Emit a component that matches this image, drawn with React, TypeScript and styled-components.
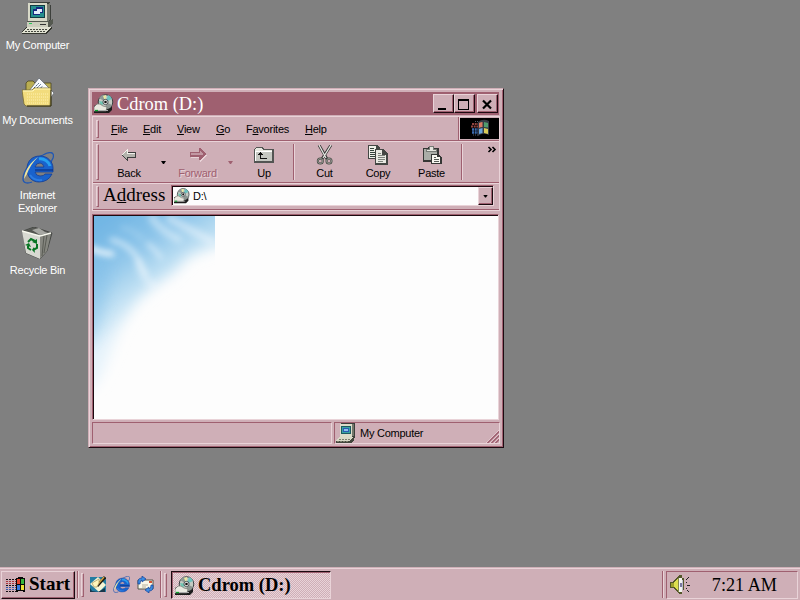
import React from "react";
import styled, { createGlobalStyle } from "styled-components";

const face = "#cfafb7";
const light = "#e9d3d8";
const shade = "#9f6070";
const dark = "#1c0a10";

const Global = createGlobalStyle`
  * { box-sizing: border-box; }
  body { margin: 0; overflow: hidden; font-family: "Liberation Sans", Arial, sans-serif; font-size: 11px; color: #000; }
  svg { display: block; flex: none; }
  u { text-decoration-thickness: 1px; text-underline-offset: 1px; }
`;

const Screen = styled.div`
  position: relative;
  width: 800px;
  height: 600px;
  display: flex;
  flex-direction: column;
  background: #808080;
`;

const Desktop = styled.div`
  flex: 1;
  width: 75px;
`;

const Shortcut = styled.div`
  height: 75px;
  padding-top: 2px;
  display: flex;
  flex-direction: column;
  align-items: center;
  gap: 5px;
  color: #fff;
`;

const Label = styled.span<{ $track?: number }>`
  font-size: 11px;
  line-height: 13px;
  letter-spacing: ${(p) => p.$track ?? -0.25}px;
  white-space: pre;
  text-align: center;
`;

const Window = styled.section`
  position: absolute;
  left: 88px;
  top: 88px;
  width: 416px;
  height: 360px;
  padding: 2px;
  display: flex;
  flex-direction: column;
  background: ${face};
  border: 1px solid ${face};
  border-right-color: ${dark};
  border-bottom-color: ${dark};
  box-shadow: inset 1px 1px ${light}, inset -1px -1px ${shade};
`;

const TitleBar = styled.header`
  height: 23px;
  margin: 1px 2px 0 1px;
  padding: 0 1px 0 2px;
  display: flex;
  align-items: center;
  background: ${shade};
  color: #fff;
`;

const Serif = styled.span<{ $bold?: boolean; $size?: number; $track?: number }>`
  font-family: "Liberation Serif", "Times New Roman", serif;
  font-size: ${(p) => p.$size ?? 18}px;
  font-weight: ${(p) => (p.$bold ? 700 : 400)};
  letter-spacing: ${(p) => p.$track ?? 0}px;
  line-height: 20px;
  white-space: nowrap;
`;

const TitleText = styled(Serif)`
  flex: 1;
  margin: 0 0 0 3px;
`;

const TaskText = styled(Serif)`
  margin-top: -2px;
`;

const AddressText = styled(Serif)`
  margin: 1px 0 0 4px;
`;

const CaptionButton = styled.button<{ $gap?: number }>`
  width: 21px;
  height: 19px;
  margin: 0 0 0 ${(p) => p.$gap ?? 0}px;
  padding: 0;
  background: ${face};
  border: 1px solid;
  border-color: ${light} ${dark} ${dark} ${light};
  box-shadow: inset -1px -1px ${shade};
`;

const Bands = styled.div`
  height: 95px;
  margin: 1px 1px 0;
  border: 1px solid ${light};
  display: flex;
  flex-direction: column;
`;

const Band = styled.div<{ $h: number }>`
  height: ${(p) => p.$h}px;
  padding-left: 3px;
  display: flex;
  border-bottom: 1px solid ${shade};
  & + & { border-top: 1px solid ${light}; }
`;

const Grip = styled.i<{ $h: number; $m?: string }>`
  width: 3px;
  height: ${(p) => p.$h}px;
  margin: ${(p) => p.$m ?? "2px 0 0"};
  flex: none;
  border: 1px solid;
  border-color: ${light} ${shade} ${shade} ${light};
`;

const Menu = styled.nav`
  flex: 1;
  display: flex;
  padding: 6px 0 0 12px;
`;

const MenuItem = styled(Label)<{ $w: number }>`
  width: ${(p) => p.$w}px;
  text-align: left;
`;

const Throbber = styled.div`
  width: 41px;
  height: 23px;
  border-left: 1px solid ${shade};
  padding: 1px 0 0 1px;
  box-shadow: inset 1px 0 ${light};
`;

const Tool = styled.div<{ $w: number; $off?: boolean }>`
  width: ${(p) => p.$w}px;
  padding-top: 3px;
  display: flex;
  flex-direction: column;
  align-items: center;
  gap: 2px;
  color: ${(p) => (p.$off ? shade : "#000")};
  text-shadow: ${(p) => (p.$off ? `1px 1px ${light}` : "none")};
`;

const DropArrow = styled.i<{ $off?: boolean; $m?: string }>`
  width: 5px;
  height: 3px;
  flex: none;
  margin: ${(p) => p.$m ?? "0"};
  background: ${(p) => (p.$off ? shade : "#000")};
  clip-path: polygon(0 0, 100% 0, 60% 100%, 40% 100%);
`;

const Rule = styled.i<{ $h: number; $m: string }>`
  width: 2px;
  height: ${(p) => p.$h}px;
  margin: ${(p) => p.$m};
  flex: none;
  background: linear-gradient(90deg, ${shade} 50%, ${light} 50%);
`;

const Chevrons = styled.svg`
  margin: 2px 0 0 24px;
`;

const AddressField = styled.div`
  width: 323px;
  height: 21px;
  margin: 1px 5px 0 auto;
  padding: 1px 0 0 2px;
  display: flex;
  align-items: center;
  gap: 3px;
  background: #fdfdfd;
  border: 1px solid;
  border-color: ${shade} ${light} ${light} ${shade};
  box-shadow: inset 1px 1px ${dark};
`;

const DropButton = styled.button`
  width: 15px;
  height: 18px;
  margin: 0 0 0 auto;
  padding: 0;
  display: flex;
  align-items: center;
  justify-content: center;
  background: ${face};
  border: 1px solid;
  border-color: ${light} ${dark} ${dark} ${light};
  box-shadow: inset -1px -1px ${shade};
`;

const View = styled.main`
  height: 206px;
  margin: 3px 2px 0 1px;
  background: #fdfdfd;
  border: 1px solid;
  border-color: ${shade} ${light} ${light} ${shade};
  box-shadow: inset 1px 1px ${dark};
  padding: 1px;
`;

const StatusBar = styled.footer`
  display: flex;
  gap: 2px;
  margin: 2px 0 0 1px;
`;

const StatusCell = styled.div<{ $w: number }>`
  width: ${(p) => p.$w}px;
  height: 22px;
  display: flex;
  align-items: center;
  gap: 4px;
  padding-left: 1px;
  border: 1px solid;
  border-color: ${shade} ${light} ${light} ${shade};
`;

const ResizeCorner = styled.svg`
  margin: auto 0 0 auto;
`;

const Taskbar = styled.div`
  height: 33px;
  padding: 3px 2px 0 1px;
  display: flex;
  background: ${face};
  border-top: 1px solid ${face};
  box-shadow: inset 0 1px ${light};
`;

const StartButton = styled.button`
  width: 74px;
  height: 28px;
  padding: 0 0 0 3px;
  display: flex;
  align-items: center;
  gap: 2px;
  background: ${face};
  border: 1px solid;
  border-color: ${light} ${dark} ${dark} ${light};
  box-shadow: inset -1px -1px ${shade};
`;

const QuickLaunch = styled.div`
  width: 75px;
  display: flex;
  gap: 7px;
  padding: 5px 0 0 6px;
`;

const TaskButton = styled.button`
  width: 160px;
  height: 28px;
  margin-left: 4px;
  padding: 1px 0 0 3px;
  display: flex;
  align-items: center;
  gap: 3px;
  background: repeating-conic-gradient(${face} 0 25%, ${light} 0 50%) 0 0 / 2px 2px;
  border: 1px solid;
  border-color: ${dark} ${light} ${light} ${dark};
  box-shadow: inset 1px 1px ${shade};
`;

const Tray = styled.div`
  width: 132px;
  height: 28px;
  padding: 0 20px 0 3px;
  display: flex;
  align-items: center;
  justify-content: space-between;
  border: 1px solid;
  border-color: ${shade} ${light} ${light} ${shade};
`;

const Spacer = styled.div`
  flex: 1;
`;

const ComputerIcon = () => (
  <svg width="32" height="32" viewBox="0 0 32 32" shapeRendering="crispEdges">
    <path d="M7 1L9 0H28V3L29 4V20L27 22H7Z" fill="#3d403c" />
    <path d="M6 1H25V20H6Z" fill="#d8d9c8" />
    <path d="M25 2L28 1V18L25 20Z" fill="#777b70" />
    <path d="M8 3H23V16H8Z" fill="#123c42" />
    <path d="M9 4H22V15H9Z" fill="#258f8d" />
    <path d="M11 7H18V13H11ZM14 5H21V11H14Z" fill="#172a80" />
    <path d="M12 9H18V12H12ZM15 7H20V10H15Z" fill="#e3eefb" />
    <path d="M5 19H27L31 17V22L26 26H5Z" fill="#555950" />
    <path d="M5 20H26V25H5Z" fill="#cbcdbc" />
    <path d="M7 21h3v1H7Z" fill="#26c657" />
    <path d="M18 22h6v1h-6Z" fill="#333" />
    <path d="M4 25H30V27L24 32H0V29Z" fill="#34362f" />
    <path d="M5 25H29L23 31H0Z" fill="#e1e2d2" />
    <path d="M5 27.5H26M3 29.5H23" stroke="#464940" strokeWidth="1" strokeDasharray="2 1" />
  </svg>
);

const SmallComputerIcon = () => (
  <svg width="20" height="20" viewBox="0 0 20 20" shapeRendering="crispEdges">
    <path d="M5 0H19V14L17 16H5Z" fill="#3a3e3a" />
    <path d="M4 1H16V14H4Z" fill="#dcdcca" />
    <path d="M16 1H18V13H16Z" fill="#73776b" />
    <path d="M5 3H15V11H5Z" fill="#1c5a60" />
    <path d="M6 4H14V10H6Z" fill="#38a3a3" />
    <path d="M7 5H13V9H7Z" fill="#2a5bb4" />
    <path d="M8 6H12V8H8Z" fill="#8cc0ea" />
    <path d="M3 14H18V17L15 20H0V18Z" fill="#42463c" />
    <path d="M3 14H17L14 18H0Z" fill="#d9dac8" />
    <path d="M3 16.5H15M1 18.5H13" stroke="#7d806e" strokeDasharray="2 1" />
  </svg>
);

const DocumentsIcon = () => (
  <svg width="32" height="32" viewBox="0 0 32 32">
    <path d="M4 15V6L6 4H11L13 6H29V29H5Z" fill="#b9ad52" stroke="#4a451e" strokeWidth=".8" />
    <path d="M7 14L17 1L32 16L27 23Z" fill="#f8fbff" stroke="#59606a" strokeWidth=".7" />
    <path d="M12 11L17 6M13 13L19 7M16 13L21 9M20 14L23 11M23 15L25 13" stroke="#385575" strokeDasharray="2 1" />
    <path d="M0 13H10L12 11H29L28 29H4L2 27Z" fill="#f2dc7d" stroke="#796d32" strokeWidth=".8" />
    <path d="M1 14H11L13 12H28" fill="none" stroke="#fff8bc" />
    <path d="M5 17H26M5 20H26M5 23H27M5 26H27" stroke="#fff1b1" strokeDasharray="1 1" />
    <path d="M5 29H29V13" stroke="#3b371d" fill="none" />
  </svg>
);

const ExplorerIcon = ({ size }: { size: number }) => (
  <svg width={size} height={size} viewBox="0 0 32 32">
    <path d="M10 30C5 32 1 31 1 27C1 19 10 7 21 3C28 -1 33 0 31 6L29 10" fill="none" stroke="#2258b2" strokeWidth="1.3" />
    <path fillRule="evenodd" d="M31 16V20H13Q14 24 18 24Q22 24 23 22H30Q26 30 17 30C10 30 5 25 5 17C5 9 10 4 18 4C26 4 31 10 31 16ZM13 15H22Q21 11 18 11Q14 11 13 15Z" fill="#1962cc" stroke="#123d97" strokeWidth=".8" />
    <path d="M17 7C22 6 27 10 28 14" fill="none" stroke="#27a0ee" strokeWidth="3" />
    <path d="M8 23Q12 29 20 28" fill="none" stroke="#2c7ce0" strokeWidth="2" />
    <path d="M2 27C3 17 9 10 16 5Q8 13 5 22Z" fill="#eee6a1" />
    <path d="M13 18H31" stroke="#072f83" strokeWidth="1.2" />
  </svg>
);

const RecycleIcon = () => (
  <svg width="32" height="32" viewBox="0 0 32 32">
    <path d="M1 4L12 0L30 6L25 24L18 32L4 26Z" fill="#666763" stroke="#343632" strokeWidth=".7" />
    <path d="M2 4L12 1L28 6L18 9Z" fill="#545651" />
    <path d="M10 3L17 1L23 5L26 6L18 8Z" fill="#a6a7a2" />
    <path d="M0 4L18 9L18 32L4 26Z" fill="#d8d9d2" />
    <path d="M18 9L29 6L25 24L18 32Z" fill="#85867f" />
    <path d="M22 9L20 29M25 8L22 26" stroke="#595b54" />
    <path d="M0 4L18 9L29 6" stroke="#f8f9ef" strokeWidth="1.3" fill="none" />
    <g fill="none" stroke="#087524" strokeWidth="2"><path d="M6 15L9 12L13 14" /><path d="M15 17L15 21L11 23" /><path d="M9 23L6 21L6 19" /></g>
    <path d="M10 15L15 17L15 12ZM12 20L10 23L13 26ZM3 18L7 16L9 20Z" fill="#087524" />
  </svg>
);

const DiscIcon = ({ size = 20 }: { size?: number }) => (
  <svg width={size} height={size} viewBox="0 0 20 20">
    <path d="M0 12L4 10H17L18 12V16L15 19H0Z" fill="#1c1c1c" />
    <circle cx="11.5" cy="8" r="7.3" fill="#c4cbc4" stroke="#3a4041" strokeWidth="1" />
    <path d="M11.5 8L5 4Q8 0 11 1Z" fill="#8f9a96" />
    <path d="M11.5 8L14 1Q17 2 18 5Z" fill="#6cc3c0" />
    <path d="M11.5 8L18 11Q16 15 12 15Z" fill="#8d9692" />
    <path d="M11.5 8L7 12L5 7Z" fill="#6fc7b4" />
    <path d="M11.5 8L9 2L12 1Z" fill="#eceba0" />
    <circle cx="11.5" cy="8" r="2.6" fill="#f9faf7" stroke="#4b5054" />
    <circle cx="11.5" cy="8" r="1.3" fill="#111" />
    <path d="M0 13L3 10Q6 9 9 12L13 13L12 17H0Z" fill="#e9e9e0" stroke="#6f706a" strokeWidth=".7" />
    <path d="M0 16.5H14" fill="none" stroke="#aaa" />
    <path d="M1 16.5H4" stroke="#08a52a" strokeWidth="1.3" />
  </svg>
);

const StartFlag = () => (
  <svg width="22" height="20" viewBox="0 0 22 20" shapeRendering="crispEdges">
    <path d="M11 3H13V2H18V3H20V17H18V16H13V17H11Z" fill="#080808" />
    <path d="M12 4H15V9H12Z" fill="#e5442c" />
    <path d="M16 4H19V9H16Z" fill="#36b53c" />
    <path d="M12 10H15V15H12Z" fill="#3478e0" />
    <path d="M16 10H19V15H16Z" fill="#efe034" />
    <path d="M1 4.5H11M1 10.5H11M1 16.5H11" stroke="#151015" strokeDasharray="2 1" />
    <path d="M1 6.5H11M1 8.5H11" stroke="#a8333b" strokeDasharray="2 1" />
    <path d="M1 12.5H11M1 14.5H11" stroke="#3357ac" strokeDasharray="2 1" />
  </svg>
);

const BrandFlag = () => (
  <svg width="39" height="21" viewBox="0 0 39 21">
    <rect width="39" height="21" fill="#000" />
    <path d="M18 4Q23 0 29 3V17Q23 14 18 18Z" fill="#343a44" />
    <path d="M19 5Q21 4 22.5 4V9Q20 9 19 10Z" fill="#d97a63" />
    <path d="M24 4L28 5V9.5L24 9Z" fill="#4f9b6d" />
    <path d="M19 11L22.5 10V15L19 16Z" fill="#6aa5dd" />
    <path d="M24 10L28 11V16L24 15Z" fill="#d9cb58" />
    <path d="M12 6H18M11 8.5H18" stroke="#8f4440" strokeWidth="2" strokeDasharray="2 .7" />
    <path d="M12 11.5H18M12 14.5H18" stroke="#3c6cae" strokeWidth="2.3" strokeDasharray="2 .7" />
    <path d="M15 3.5H18M13 17H18" stroke="#505c68" strokeDasharray="1 1" />
  </svg>
);

const ArrowIcon = ({ off = false }: { off?: boolean }) => (
  <svg width="20" height="20" viewBox="0 0 20 20" shapeRendering="crispEdges">
    {off ? (
      <>
        <path d="M3 9H12V4L19 10L12 17V13H3Z" fill={light} />
        <path d="M2 7H11V3H12L18 9L12 15H11V12H2Z" fill={shade} />
        <path d="M3 8H12V6L15 9V10H3Z" fill="#c298a3" />
      </>
    ) : (
      <>
        <path d="M2 10L9 3V7H17V13H9V17Z" fill="#3e3e3e" />
        <path d="M3 10L8 5V8H16V12H8V15Z" fill="#b3b3ac" />
        <path d="M3 10L8 5V8.5H16" fill="none" stroke="#f1f0ea" />
      </>
    )}
  </svg>
);

const FolderIcon = () => (
  <svg width="20" height="20" viewBox="0 0 20 20" shapeRendering="crispEdges">
    <path d="M0 17V4L2 2H8L10 4H20V18H0Z" fill="#535553" />
    <path d="M1 4L3 3H7L9 5H18V7H1Z" fill="#e7e8e0" />
    <path d="M1 7H18V16H1Z" fill="#c6c8c2" />
    <path d="M1 6.5H18M1.5 6V16" stroke="#fff" />
    <path d="M6 7H7V8H8V9H9V10H7V13H13V14H6V10H4V9H5V8H6Z" fill="#111" />
  </svg>
);

const CutIcon = () => (
  <svg width="20" height="20" viewBox="0 0 20 20">
    <path d="M4 0L12 14M16 0L7 14" stroke="#333" strokeWidth="2.8" />
    <path d="M4 0L11 13M16 0L8 13" stroke="#e3e5df" strokeWidth="1.3" />
    <circle cx="5.3" cy="16" r="2.5" fill="none" stroke="#41443f" strokeWidth="2" />
    <circle cx="14" cy="16" r="2.5" fill="none" stroke="#41443f" strokeWidth="2" />
    <circle cx="5.3" cy="16" r="2.5" fill="none" stroke="#b6b9b1" strokeWidth=".7" />
    <circle cx="14" cy="16" r="2.5" fill="none" stroke="#b6b9b1" strokeWidth=".7" />
  </svg>
);

const CopyIcon = () => (
  <svg width="20" height="20" viewBox="0 0 20 20" shapeRendering="crispEdges">
    <path d="M0 0H9L12 3V14H0Z" fill="#444744" />
    <path d="M1 1H8V4H11V13H1Z" fill="#f0f0e9" />
    <path d="M2 3.5H6M2 5.5H6M2 7.5H7M2 9.5H7M2 11.5H7" stroke="#34443c" />
    <path d="M7 4H15L20 9V20H7Z" fill="#444744" />
    <path d="M8 5H14V9H18V18H8Z" fill="#e8e9e2" />
    <path d="M10 8.5H13M10 10.5H17M10 12.5H17M10 14.5H17M10 16.5H15" stroke="#7d837d" />
    <path d="M14.5 5V9.5H18" fill="none" stroke="#444744" />
  </svg>
);

const PasteIcon = () => (
  <svg width="20" height="20" viewBox="0 0 20 20" shapeRendering="crispEdges">
    <path d="M1 3H6L7 1H11L12 3H17V17H1Z" fill="#353735" />
    <path d="M2 4H15V15H2Z" fill="#aaada7" />
    <path d="M7 1H11V4H14V6H4V4H7Z" fill="#e5e6df" stroke="#777b76" />
    <path d="M9 9H16L20 12V19H9Z" fill="#353735" />
    <path d="M10 10H15V12H18V18H10Z" fill="#f6f6ef" />
    <path d="M12 12.5H14M12 14.5H17M12 16.5H17" stroke="#575c57" />
  </svg>
);

const DesktopPadIcon = () => (
  <svg width="16" height="17" viewBox="0 0 16 17">
    <path d="M0 1H16V16H0Z" fill="#247ca1" />
    <path d="M0 8L8 1L16 9L9 16Z" fill="#f7f5d5" />
    <path d="M2 15L8 16L15 12V16H0V12Z" fill="#17364b" />
    <path d="M7 10L15 1" stroke="#211a11" strokeWidth="3" />
    <path d="M8 8L14 1" stroke="#d6a443" strokeWidth="1.4" />
    <path d="M2 7L9 3V7L7 11H4Z" fill="#fff6ba" stroke="#9d9360" strokeWidth=".7" />
  </svg>
);

const MailIcon = () => (
  <svg width="17" height="17" viewBox="0 0 17 17">
    <path d="M1 4H16V13H1Z" fill="#f8f7e8" stroke="#53564b" />
    <path d="M5 9H11M5 11H9" stroke="#b6ae9b" />
    <path d="M1 8Q0 2 5 2L5 0L9 3L5 6V4Q3 4 3 8Z" fill="#3b8de3" stroke="#123f96" strokeWidth=".7" />
    <path d="M16 9Q17 15 12 15L12 17L8 14L12 11V13Q14 13 14 9Z" fill="#3b8de3" stroke="#123f96" strokeWidth=".7" />
    <path d="M12 5H15V7H12Z" fill="#d55131" />
  </svg>
);

const SpeakerIcon = () => (
  <svg width="22" height="20" viewBox="0 0 22 20" shapeRendering="crispEdges">
    <path d="M0 7H3L8 1H9V0H12V3H14V15H12V19H9L3 13H0Z" fill="#54572a" />
    <path d="M1 8H4V12H1Z" fill="#9fa12e" />
    <path d="M4 7L8 3V16L4 12Z" fill="#dddf50" />
    <path d="M8 3H9V17H8Z" fill="#85884e" />
    <path d="M9 3H12V17H9Z" fill="#f3f5f0" />
    <path d="M12 5H13V15H12Z" fill="#b9bbcf" />
    <path d="M10 8H12V12H10Z" fill="#7778a0" />
    <path d="M16 4.5H17M17 3.5H18M18 2.5H19M16 7.5H17M17 10.5H20M16 13.5H17M17 15.5H18M18 16.5H19" stroke="#222" />
  </svg>
);

const Sky = () => (
  <svg width="121" height="200" viewBox="0 0 121 200">
    <defs>
      <linearGradient id="sky" gradientUnits="userSpaceOnUse" x1="16" y1="4" x2="72" y2="86">
        <stop stopColor="#72b6e4" />
        <stop offset=".4" stopColor="#8fc6ea" />
        <stop offset=".7" stopColor="#bddff3" />
        <stop offset="1" stopColor="#e6f3fb" />
      </linearGradient>
      <filter id="soft" x="-40%" y="-40%" width="180%" height="180%"><feGaussianBlur stdDeviation="7" /></filter>
      <filter id="wisp" x="-40%" y="-40%" width="180%" height="180%"><feGaussianBlur stdDeviation="3.2" /></filter>
    </defs>
    <path d="M-30-30H160V28L121 30L95 40L79 57L60 70L43 85L26 110L14 142L4 165L-12 180H-30Z" fill="url(#sky)" filter="url(#soft)" />
    <path d="M-30 40H14Q18 90-4 128H-30Z" fill="#82bfe8" opacity=".45" filter="url(#soft)" />
    <g filter="url(#wisp)" fill="none" stroke="#f0f8fd" strokeLinecap="round">
      <path d="M-4 32Q6 37 18 38" strokeWidth="5" />
      <path d="M18 24Q34 28 42 40L52 58" strokeWidth="5" opacity=".6" />
      <path d="M54 28Q61 33 67 42" strokeWidth="4" opacity=".6" />
      <path d="M58 2Q66 14 84 23" strokeWidth="8" opacity=".45" />
      <path d="M28 11Q43 16 48 23" strokeWidth="4" opacity=".2" />
      <path d="M76 3Q95 13 117 25" strokeWidth="8" opacity=".5" />
      <path d="M45 46Q46 60 60 70" strokeWidth="8" opacity=".4" />
    </g>
  </svg>
);

export default function App() {
  return (
    <Screen>
      <Global />
      <Desktop>
        <Shortcut><ComputerIcon /><Label>My Computer</Label></Shortcut>
        <Shortcut><DocumentsIcon /><Label>My Documents</Label></Shortcut>
        <Shortcut><ExplorerIcon size={32} /><Label>{"Internet\nExplorer"}</Label></Shortcut>
        <Shortcut><RecycleIcon /><Label>Recycle Bin</Label></Shortcut>
      </Desktop>

      <Window>
        <TitleBar>
          <DiscIcon />
          <TitleText $size={18.4}>Cdrom (D:)</TitleText>
          <CaptionButton aria-label="Minimize">
            <svg width="18" height="16"><path d="M4 12H12V14H4Z" fill="#000" /></svg>
          </CaptionButton>
          <CaptionButton aria-label="Maximize">
            <svg width="18" height="16" shapeRendering="crispEdges"><path d="M3 3H14V14H3ZM4 5V13H13V5Z" fill="#000" fillRule="evenodd" /></svg>
          </CaptionButton>
          <CaptionButton $gap={2} aria-label="Close">
            <svg width="18" height="16"><path d="M5 4.5L13 12.5M13 4.5L5 12.5" stroke="#000" strokeWidth="2.2" /></svg>
          </CaptionButton>
        </TitleBar>

        <Bands>
          <Band $h={24}>
            <Grip $h={18} $m="3px 0 0" />
            <Menu>
              <MenuItem $w={32}><u>F</u>ile</MenuItem>
              <MenuItem $w={34}><u>E</u>dit</MenuItem>
              <MenuItem $w={39}><u>V</u>iew</MenuItem>
              <MenuItem $w={30}><u>G</u>o</MenuItem>
              <MenuItem $w={59}>F<u>a</u>vorites</MenuItem>
              <MenuItem $w={30}><u>H</u>elp</MenuItem>
            </Menu>
            <Throbber><BrandFlag /></Throbber>
          </Band>
          <Band $h={42}>
            <Grip $h={36} />
            <Tool $w={60}><ArrowIcon /><Label>Back</Label></Tool>
            <DropArrow $m="19px 0 0 2px" />
            <Tool $w={63} $off><ArrowIcon off /><Label>Forward</Label></Tool>
            <DropArrow $off $m="19px 0 0 -1px" />
            <Tool $w={62}><FolderIcon /><Label>Up</Label></Tool>
            <Rule $h={36} $m="2px 0 0 -2px" />
            <Tool $w={59}><CutIcon /><Label>Cut</Label></Tool>
            <Tool $w={48}><CopyIcon /><Label>Copy</Label></Tool>
            <Tool $w={59}><PasteIcon /><Label>Paste</Label></Tool>
            <Rule $h={36} $m="2px 0 0 0" />
            <Chevrons width="11" height="12"><path d="M1.5 3L4 5.5L1.5 8M5.5 3L8 5.5L5.5 8" fill="none" stroke="#000" strokeWidth="1.6" /></Chevrons>
          </Band>
          <Band $h={27}>
            <Grip $h={21} />
            <AddressText $size={19}>A<u>d</u>dress</AddressText>
            <AddressField>
              <DiscIcon size={16} />
              <Label>D:\</Label>
              <DropButton aria-label="Show addresses"><DropArrow /></DropButton>
            </AddressField>
          </Band>
        </Bands>

        <View><Sky /></View>

        <StatusBar>
          <StatusCell $w={240} />
          <StatusCell $w={166}>
            <SmallComputerIcon />
            <Label>My Computer</Label>
            <ResizeCorner width="13" height="13">
              <path d="M0 13L13 0M4 13L13 4M8 13L13 8" stroke={light} strokeWidth="1" />
              <path d="M1.3 13.3L13.3 1.3M5.3 13.3L13.3 5.3M9.3 13.3L13.3 9.3" stroke={shade} strokeWidth="1.5" />
            </ResizeCorner>
          </StatusCell>
        </StatusBar>
      </Window>

      <Taskbar>
        <StartButton><StartFlag /><TaskText $bold $size={19}>Start</TaskText></StartButton>
        <Rule $h={27} $m="0 2px 0 2px" />
        <Grip $h={24} $m="2px 0 0" />
        <QuickLaunch><DesktopPadIcon /><ExplorerIcon size={17} /><MailIcon /></QuickLaunch>
        <Rule $h={27} $m="0 2px 0 1px" />
        <Grip $h={24} $m="2px 0 0" />
        <TaskButton><DiscIcon /><TaskText $bold $size={18.5}>Cdrom (D:)</TaskText></TaskButton>
        <Spacer />
        <Rule $h={27} $m="0 2px 0 0" />
        <Tray><SpeakerIcon /><Serif $size={18.2}>7:21 AM</Serif></Tray>
      </Taskbar>
    </Screen>
  );
}
